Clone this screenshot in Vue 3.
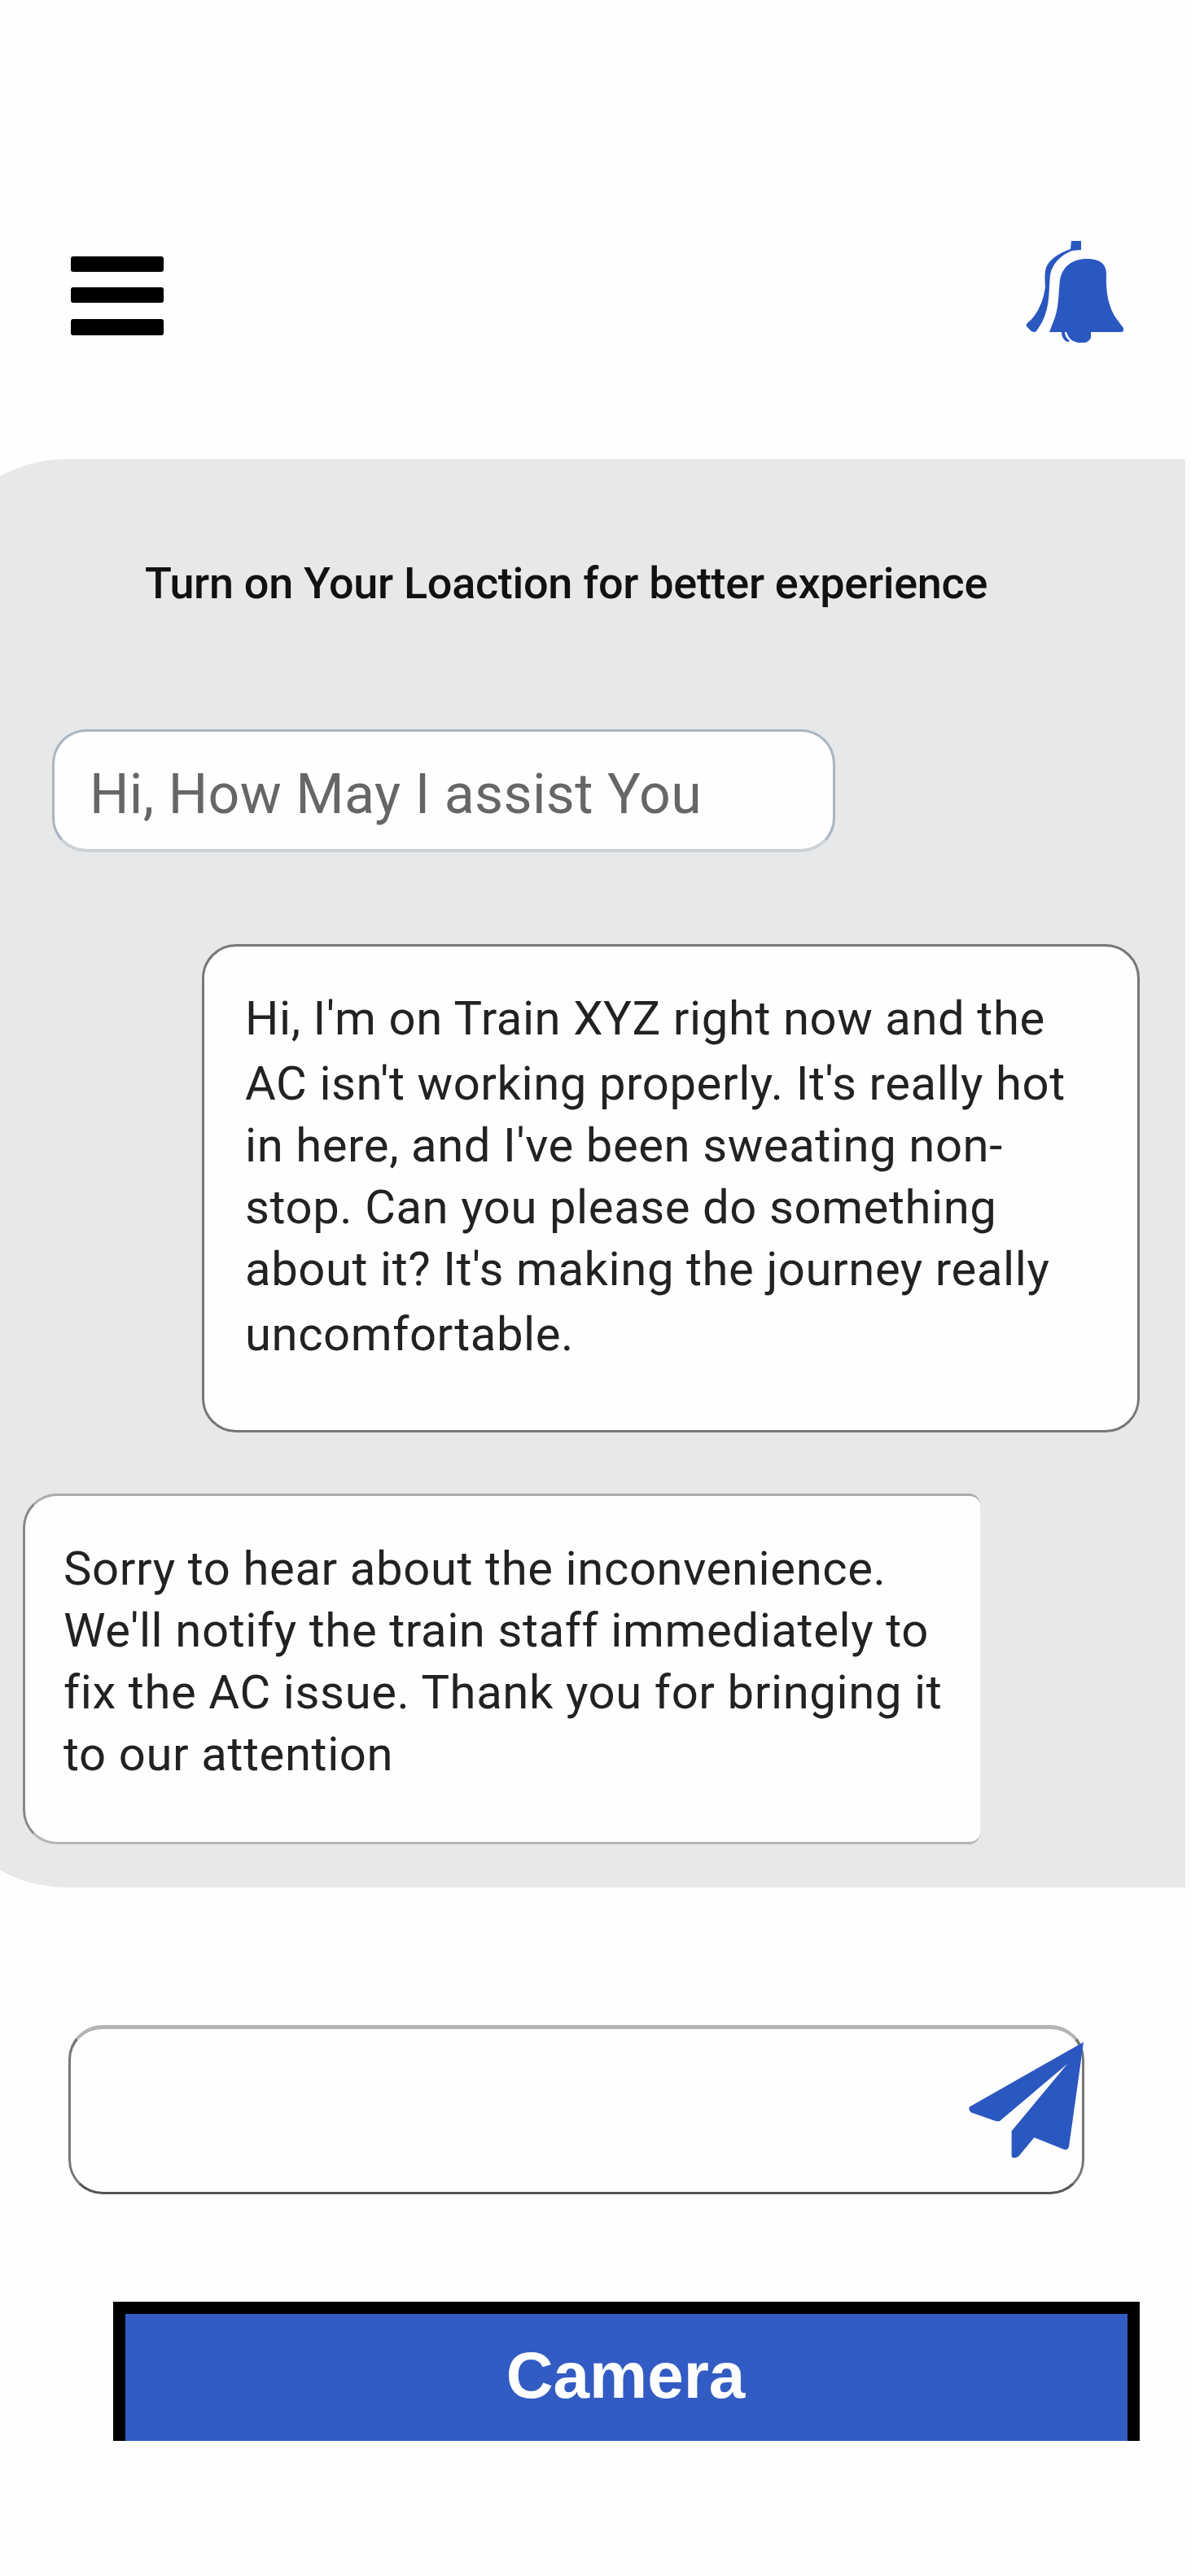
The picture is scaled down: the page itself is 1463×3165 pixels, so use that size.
<script setup>
const userLines = ["Hi, I'm on Train XYZ right now and the", "AC isn't working properly. It's really hot", "in here, and I've been sweating non-", 'stop. Can you please do something', "about it? It's making the journey really", 'uncomfortable.']
const replyLines = ['Sorry to hear about the inconvenience.', "We'll notify the train staff immediately to", 'fix the AC issue. Thank you for bringing it', 'to our attention']
</script>

<template>
  <main class="screen">
    <header class="topbar">
      <button class="icon-button" aria-label="Menu">
        <svg class="menu" viewBox="0 0 114 98"><rect y="0" width="114" height="19" rx="3" /><rect y="38" width="114" height="19" rx="3" /><rect y="77" width="114" height="20" rx="3" /></svg>
      </button>
      <button class="icon-button" aria-label="Notifications">
        <svg class="bell" viewBox="0 0 122 128">
          <path d="M56 1H68V12L57 13C43 18 32 30 30 43C28 63 30 81 20 101L13 112Q10 114 7 112L1 106Q0 103 3 101C14 92 22 75 24 57C23 43 23 34 29 27C36 19 46 14 55 11Z" />
          <path d="M29 113L34 100C41 84 40 66 42 49C45 32 58 23 75 23C91 23 99 29 99 42C98 65 102 83 111 96L120 108V112L117 113H80V120Q77 126 71 126H64Q53 124 50 113H48Q48 119 54 124Q52 126 49 124Q44 120 44 113Z" />
        </svg>
      </button>
    </header>
    <section class="panel">
      <h1 class="notice"><span>Turn on Your Loaction for better experience</span></h1>
      <div class="bubble greeting"><span>Hi, How May I assist You</span></div>
      <div class="bubble user"><p v-for="l in userLines" :key="l"><span>{{ l }}</span></p></div>
      <div class="bubble reply"><p v-for="l in replyLines" :key="l"><span>{{ l }}</span></p></div>
    </section>
    <div class="composer">
      <svg class="send" viewBox="0 0 144 144">
        <path d="M142 0L1 80Q-1 84 3 87L34 98H38L122 27L53 110V142Q57 145 62 141L81 118L118 133Q123 134 124 129Z" />
      </svg>
    </div>
    <button class="camera"><span>Camera</span></button>
  </main>
</template>

<style>
body { margin: 0; background: #fff; }
</style>
<style scoped>
.screen { width: 1463px; height: 3165px; background: #fefefe; overflow: hidden; font-family: Roboto, sans-serif; box-sizing: border-box; }
.topbar { height: 564px; display: flex; justify-content: space-between; align-items: flex-start; padding: 295px 81px 0 87px; box-sizing: border-box; }
.icon-button { border: 0; padding: 0; background: none; display: flex; }
.menu { width: 114px; height: 98px; margin-top: 20px; fill: #000; }
.bell { width: 122px; height: 128px; fill: #2b57c0; }
.panel { width: 1540px; height: 1755px; margin-left: -84px; padding-left: 84px; background: #e6e8e9; border-radius: 165px 0 0 165px; display: flex; flex-direction: column; align-items: flex-start; box-sizing: border-box; }
.notice { margin: 118px 0 0 178px; height: 70px; font-size: 54px; line-height: 70px; font-weight: 500; letter-spacing: -0.3px; color: #111; white-space: nowrap; }
.bubble { background: #fefefe; box-sizing: border-box; border: 3px solid #777; border-radius: 42px; white-space: nowrap; }
.greeting { margin: 144px 0 0 64px; width: 962px; height: 151px; border-color: #a9b5c1; border-bottom: 4px solid #cbd1d6; font-size: 68px; line-height: 155px; letter-spacing: 0.35px; color: #666; padding-left: 43px; }
.user { margin: 113px 0 0 248px; width: 1152px; height: 600px; padding: 50px 0 0 50px; font-size: 58px; letter-spacing: 0.58px; color: #222; }
p { margin: 0; height: 76px; line-height: 77px; }
.user p:nth-child(4n + 1) { height: 80px; }
.reply { margin: 75px 0 0 28px; width: 1176px; height: 431px; padding: 51px 0 0 47px; font-size: 58px; letter-spacing: 0.61px; color: #222; border-color: #aaa #777 #b4b4b4 #888; border-right: 0; border-radius: 42px 14px 14px 42px; }
.composer { margin: 169px 0 0 84px; width: 1248px; height: 208px; box-sizing: border-box; border: 3px solid #777; border-top: 5px solid #b4b4b4; border-bottom-color: #555; border-radius: 42px; display: flex; justify-content: flex-end; }
.send { width: 143px; height: 143px; fill: #2b57c0; margin: 16px -4px 0 0; flex: none; }
.camera { display: block; margin: 132px 0 0 139px; width: 1261px; height: 171px; border: 15px solid #000; border-bottom: 0; background: #325cc3; color: #fff; font: bold 80px "Liberation Sans", sans-serif; padding: 0 2px 4px 0; }
</style>
